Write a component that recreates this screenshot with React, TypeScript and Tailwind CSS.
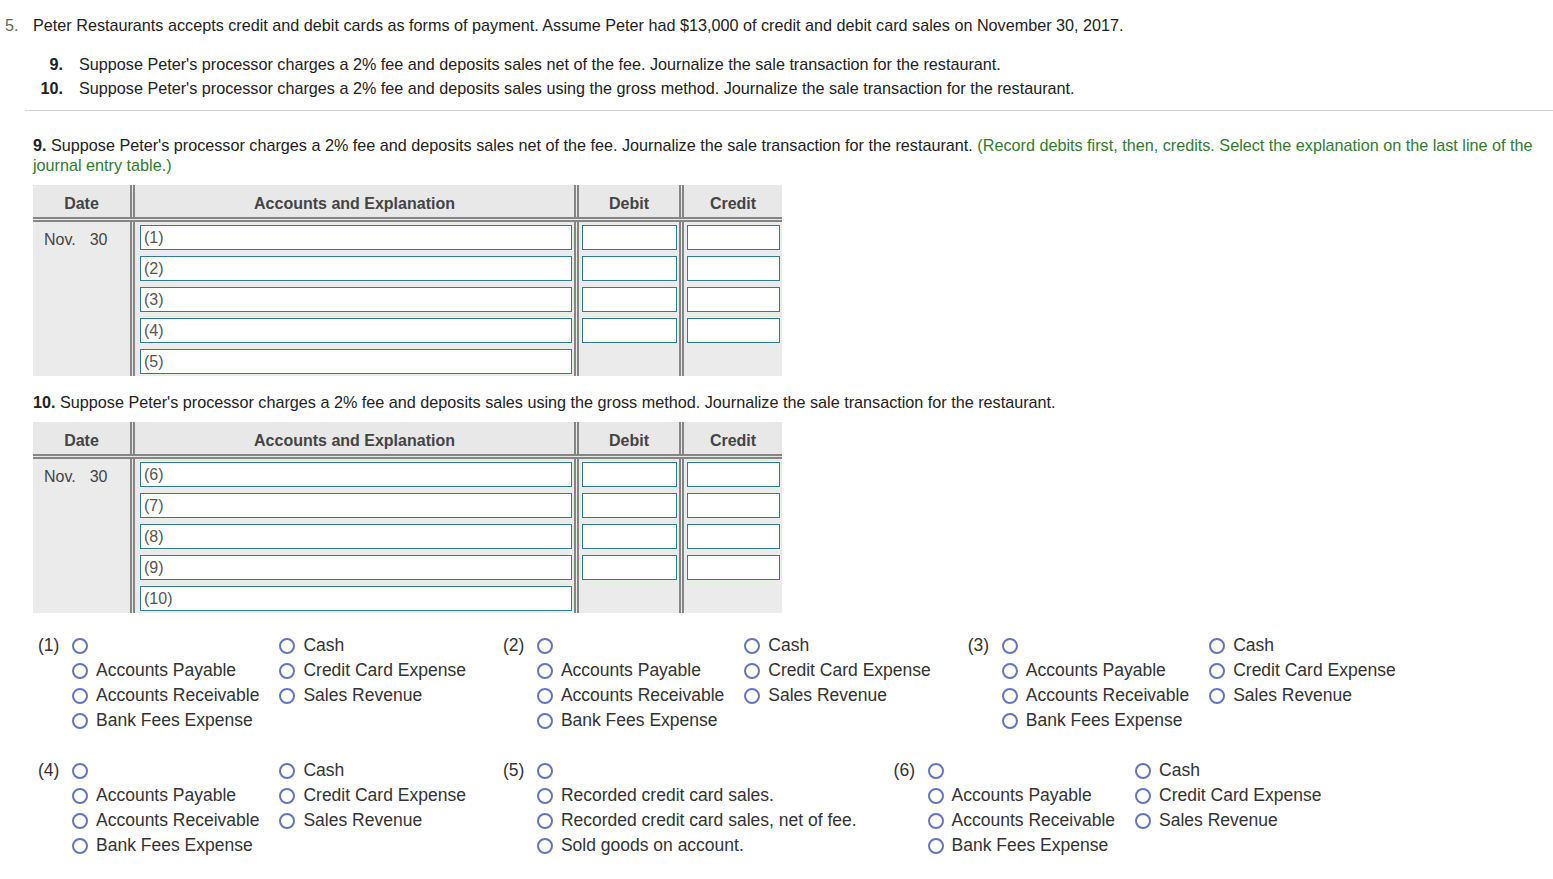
import React from "react";

const accountOptions = [
    "",
    "Cash",
    "Accounts Payable",
    "Credit Card Expense",
    "Accounts Receivable",
    "Sales Revenue",
    "Bank Fees Expense",
];

const explanationOptions = [
    "",
    "Recorded credit card sales.",
    "Recorded credit card sales, net of fee.",
    "Sold goods on account.",
];

const Radio = () => (
    <span className="inline-block h-[16px] w-[16px] shrink-0 rounded-full border-2 border-[#6474c6] bg-white" />
);

type ChoiceProps = {
    label: string
    options: string[]
    cols: 1 | 2
}

const Choice = ({ label, options, cols }: ChoiceProps) => (
    <div className="flex items-start">
        <span className="w-[34px] shrink-0 leading-[25px]">{label}</span>
        <div className={cols === 2 ? "grid grid-cols-[auto_auto] gap-x-[20px]" : "grid grid-cols-1"}>
            {options.map((opt, i) => (
                <div key={i} className="flex h-[25px] items-center gap-[8px] whitespace-nowrap">
                    <Radio />
                    {opt && <span>{opt}</span>}
                </div>
            ))}
        </div>
    </div>
);

type JournalProps = {
    start: number
}

const Field = ({ text }: { text?: string }) => (
    <div className="flex h-[25px] items-center border border-[#2f7d8f] bg-white pl-[3px] text-[#555]">
        {text}
    </div>
);

const JournalTable = ({ start }: JournalProps) => {
    const rows = [0, 1, 2, 3, 4].map((i) => `(${start + i})`);
    const sep = "border-r-[5px] border-double border-[#858585]";
    return (
        <div className="w-[749px] bg-[#ebebeb] text-[16px] text-[#444]">
            <div className="flex h-[37px] border-b-[5px] border-double border-[#858585] bg-[#e8e8e8] font-bold">
                <div className={`flex w-[102px] items-center justify-center pt-[6px] ${sep}`}>Date</div>
                <div className={`flex w-[444px] items-center justify-center pt-[6px] ${sep}`}>Accounts and Explanation</div>
                <div className={`flex w-[105px] items-center justify-center pt-[6px] ${sep}`}>Debit</div>
                <div className="flex w-[98px] items-center justify-center pt-[6px]">Credit</div>
            </div>
            <div className="flex">
                <div className={`w-[102px] pl-[11px] pt-[8px] leading-[20px] ${sep}`}>
                    Nov.<span className="ml-[14px]">30</span>
                </div>
                <div className={`flex w-[444px] flex-col gap-[6px] pb-[2px] pl-[5px] pr-[2px] pt-[3px] ${sep}`}>
                    {rows.map((r) => <Field key={r} text={r} />)}
                </div>
                <div className={`flex w-[105px] flex-col gap-[6px] pl-[3px] pr-[2px] pt-[3px] ${sep}`}>
                    {[0, 1, 2, 3].map((i) => <Field key={i} />)}
                </div>
                <div className="flex w-[98px] flex-col gap-[6px] pl-[3px] pr-[2px] pt-[3px]">
                    {[0, 1, 2, 3].map((i) => <Field key={i} />)}
                </div>
            </div>
        </div>
    );
};

const App = () => {
    return (
        <div className="h-[879px] w-[1553px] overflow-hidden bg-white font-['Liberation_Sans',Arial,sans-serif] text-[16.2px] text-[#222]">
            <div className="flex pt-[15px] leading-[20px]">
                <span className="w-[33px] pl-[5px] text-[#666]">5.</span>
                <span>Peter Restaurants accepts credit and debit cards as forms of payment. Assume Peter had $13,000 of credit and debit card sales on November 30, 2017.</span>
            </div>
            <div className="mt-[17px] leading-[24px]">
                <div className="flex">
                    <span className="w-[63px] text-right font-bold">9.</span>
                    <span className="ml-[16px]">Suppose Peter's processor charges a 2% fee and deposits sales net of the fee. Journalize the sale transaction for the restaurant.</span>
                </div>
                <div className="flex">
                    <span className="w-[63px] text-right font-bold">10.</span>
                    <span className="ml-[16px]">Suppose Peter's processor charges a 2% fee and deposits sales using the gross method. Journalize the sale transaction for the restaurant.</span>
                </div>
            </div>
            <div className="ml-[25px] mt-[10px] border-t border-[#d2d2d2]" />

            <div className="px-[33px]">
                <p className="mt-[24px] w-[1515px] leading-[20px]">
                    <b>9.</b> Suppose Peter's processor charges a 2% fee and deposits sales net of the fee. Journalize the sale transaction for the restaurant.{" "}
                    <span className="text-[#2e7d2e]">(Record debits first, then, credits. Select the explanation on the last line of the journal entry table.)</span>
                </p>
                <div className="mt-[10px]">
                    <JournalTable start={1} />
                </div>

                <p className="mt-[16px] leading-[20px]">
                    <b>10.</b> Suppose Peter's processor charges a 2% fee and deposits sales using the gross method. Journalize the sale transaction for the restaurant.
                </p>
                <div className="mt-[10px]">
                    <JournalTable start={6} />
                </div>
            </div>

            <div className="mt-[20px] flex flex-col gap-[25px] pl-[38px] text-[17.5px] text-[#333]">
                <div className="flex gap-[37px]">
                    <Choice label="(1)" options={accountOptions} cols={2} />
                    <Choice label="(2)" options={accountOptions} cols={2} />
                    <Choice label="(3)" options={accountOptions} cols={2} />
                </div>
                <div className="flex gap-[37px]">
                    <Choice label="(4)" options={accountOptions} cols={2} />
                    <Choice label="(5)" options={explanationOptions} cols={1} />
                    <Choice label="(6)" options={accountOptions} cols={2} />
                </div>
            </div>
        </div>
    );
};

export default App;
